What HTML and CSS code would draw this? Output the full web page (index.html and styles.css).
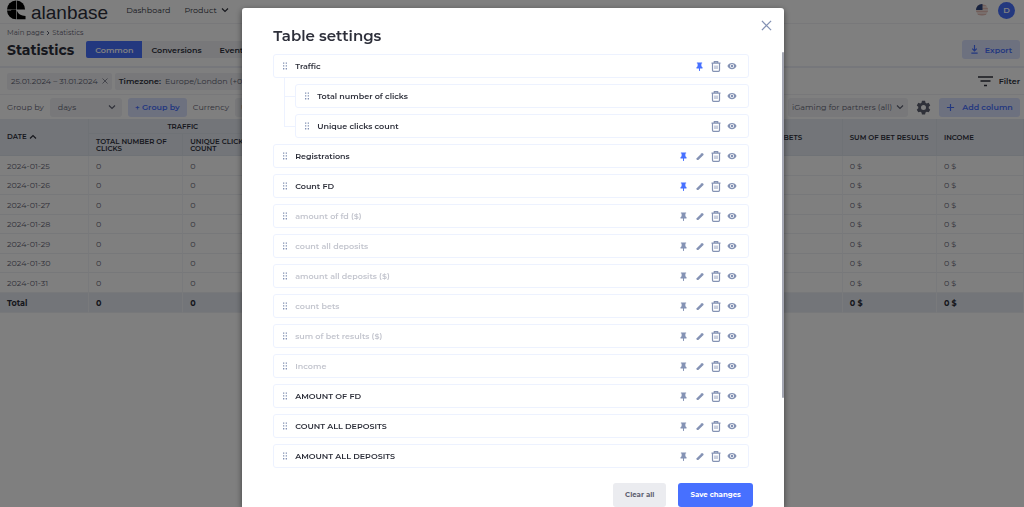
FILE: index.html
```html
<!DOCTYPE html>
<html lang="en">
<head>
  <meta charset="UTF-8">
  <meta name="viewport" content="width=device-width, initial-scale=1.0">
  <title>Statistics</title>
  <link rel="stylesheet" href="styles.css">
</head>
<body>
  <!-- Icons -->
  <svg class="sprite" aria-hidden="true">
    <symbol id="i-drag" viewBox="0 0 6 8">
      <path d="M1 .5h1.300v1.300H1zM3.700.5H5v1.300H3.700zM1 3.300h1.300v1.300H1zM3.700 3.300H5v1.300H3.700zM1 6.100h1.300v1.300H1zM3.700 6.100H5v1.300H3.700z" fill="currentColor"/>
    </symbol>
    <symbol id="i-pin" viewBox="0 0 24 24">
      <path d="M5 1h14v3h-2v7l3 3v3h-6.600v6L12 24l-1.400-1v-6H4v-3l3-3V4H5z" fill="currentColor"/>
    </symbol>
    <symbol id="i-edit" viewBox="0 0 24 24">
      <path d="M2 17.500V22.500h5L22.500 7.500a2 2 0 0 0 0-2.500l-3-3a2 2 0 0 0-2.500 0z" fill="currentColor"/>
    </symbol>
    <symbol id="i-trash" viewBox="0 0 10 11">
      <path d="M.5 2.200h9M3.300 2V.7h3.400V2M1.500 2.500v6.800a1 1 0 0 0 1 1h5a1 1 0 0 0 1-1V2.500" fill="none" stroke="currentColor" stroke-width="1.200"/>
      <path d="M4 4.500v3.500M6 4.500v3.500" stroke="currentColor" stroke-width=".9"/>
    </symbol>
    <symbol id="i-eye" viewBox="0 0 24 24">
      <path fill-rule="evenodd" d="M12 4.500C7 4.500 2.700 7.600 1 12c1.700 4.400 6 7.500 11 7.500s9.300-3.100 11-7.500c-1.700-4.400-6-7.500-11-7.500zM12 17a5 5 0 1 1 0-10 5 5 0 0 1 0 10zm0-8a3 3 0 1 0 0 6 3 3 0 0 0 0-6z" fill="currentColor"/>
    </symbol>
    <symbol id="i-down" viewBox="0 0 8 8">
      <path d="M1 2.500l3 3 3-3" fill="none" stroke="currentColor" stroke-width="1.200"/>
    </symbol>
    <symbol id="i-close" viewBox="0 0 12 12">
      <path d="M1 1l10 10M11 1L1 11" fill="none" stroke="currentColor" stroke-width="1.400"/>
    </symbol>
  </svg>

  <!-- Page -->
  <div class="page">
    <header class="topbar">
      <a class="logo" href="#">
        <svg viewBox="0 0 20 20" aria-hidden="true">
          <path d="M9.500 0v9.500H0A9.500 9.500 0 0 1 9.500 0z"/>
          <path d="M10.200 0A9.500 9.500 0 0 1 19 9.500h-8.800z"/>
          <path d="M0 10.500h4l1-.8h4.500v10A9.500 9.500 0 0 1 0 10.500z"/>
          <path d="M10.200 10.200c1.500 4 4.500 5.800 9.300 6v3.500h-9.300z"/>
        </svg>
        <span>alanbase</span>
      </a>
      <nav class="nav">
        <a href="#">Dashboard</a>
        <a href="#">Product <svg class="icon-sm"><use href="#i-down"/></svg></a>
      </nav>
      <svg class="flag" viewBox="0 0 12 12" aria-hidden="true">
        <clipPath id="round"><circle cx="6" cy="6" r="6"/></clipPath>
        <g clip-path="url(#round)">
          <path fill="#f0dcd8" d="M0 0h12v12H0z"/>
          <path stroke="#e4beb6" d="M0 1.500h12M0 4.500h12M0 7.500h12M0 10.500h12"/>
          <path fill="#2f4680" d="M0 0h6.500v6H0z"/>
        </g>
      </svg>
      <span class="avatar">D</span>
    </header>

    <div class="crumbs">
      <a href="#">Main page</a>
      <svg viewBox="0 0 4 6"><path d="M1 1l2 2-2 2" fill="none" stroke="currentColor"/></svg>
      <a href="#">Statistics</a>
    </div>

    <div class="heading">
      <h1>Statistics</h1>
      <div class="tabs">
        <button class="tab active">Common</button>
        <button class="tab">Conversions</button>
        <button class="tab">Events</button>
      </div>
      <button class="btn-light export">
        <svg class="icon" viewBox="0 0 10 10"><path d="M5 0v6M2.500 4L5 6.500 7.500 4M1.500 9h7" fill="none" stroke="currentColor" stroke-width="1.300"/></svg>
        Export
      </button>
    </div>

    <div class="filters">
      <span class="chip">25.01.2024 – 31.01.2024 <svg class="icon-xs"><use href="#i-close"/></svg></span>
      <span class="chip"><b>Timezone:</b> Europe/London (+00:00)</span>
      <button class="filter">
        <svg viewBox="0 0 15 11"><path d="M0 1h15M2.500 5h10M6 9.500h3" fill="none" stroke="currentColor" stroke-width="1.400"/></svg>
        Filter
      </button>
    </div>

    <div class="grouping">
      <label for="group">Group by</label>
      <span class="select-wrap days">
        <select id="group"><option>days</option></select>
        <svg class="icon-sm"><use href="#i-down"/></svg>
      </span>
      <button class="btn-light group-btn">+ Group by</button>
      <label for="currency">Currency</label>
      <span class="select-wrap currency">
        <select id="currency"><option>USD</option></select>
        <svg class="icon-sm"><use href="#i-down"/></svg>
      </span>
      <span class="select-wrap preset">
        <select aria-label="Preset"><option>iGaming for partners (all)</option></select>
        <svg class="icon-sm"><use href="#i-down"/></svg>
      </span>
      <button class="gear" aria-label="Table settings">
        <svg viewBox="0 0 24 24"><path fill-rule="evenodd" d="M9.500 1h5l.7 3.200 2 1.200 3.100-1 2.500 4.300-2.400 2.200v2.300l2.400 2.200-2.500 4.300-3.100-1-2 1.200-.7 3.100h-5l-.7-3.100-2-1.200-3.100 1-2.500-4.300 2.400-2.200v-2.300L1.200 8.700l2.500-4.300 3.100 1 2-1.200zM12 8a4 4 0 1 0 0 8 4 4 0 0 0 0-8z" fill="currentColor"/></svg>
      </button>
      <button class="btn-light add">
        <svg class="icon" viewBox="0 0 10 10"><path d="M5 1v8M1 5h8" stroke="currentColor" stroke-width="1.300"/></svg>
        Add column
      </button>
    </div>

    <table class="stats">
      <colgroup>
        <col class="col-date">
        <col class="col-value" span="9">
        <col>
      </colgroup>
      <thead>
        <tr>
          <th rowspan="2">DATE <svg class="icon-sm up"><use href="#i-down"/></svg></th>
          <th class="group" colspan="2">TRAFFIC</th>
          <th rowspan="2">REGISTRATIONS</th>
          <th rowspan="2">COUNT FD</th>
          <th rowspan="2">AMOUNT OF FD</th>
          <th rowspan="2">COUNT ALL DEPOSITS</th>
          <th rowspan="2">AMOUNT ALL DEPOSITS</th>
          <th rowspan="2">COUNT BETS</th>
          <th rowspan="2">SUM OF BET RESULTS</th>
          <th rowspan="2">INCOME</th>
        </tr>
        <tr>
          <th>TOTAL NUMBER OF CLICKS</th>
          <th>UNIQUE CLICKS COUNT</th>
        </tr>
      </thead>
      <tbody id="stats-body"></tbody>
    </table>
  </div>

  <!-- Table settings -->
  <div class="overlay">
    <div class="modal" role="dialog" aria-labelledby="modal-title">
      <div class="modal-head">
        <h2 id="modal-title">Table settings</h2>
        <button class="close" aria-label="Close"><svg><use href="#i-close"/></svg></button>
      </div>
      <div class="modal-body">
        <ul class="columns" id="columns"></ul>
        <span class="thumb"></span>
      </div>
      <div class="modal-foot">
        <button class="btn clear">Clear all</button>
        <button class="btn save">Save changes</button>
      </div>
    </div>
  </div>

  <script src="script.js"></script>
</body>
</html>
```

FILE: styles.css
```css
/* General Styles */
* {
  box-sizing: border-box;
}
body {
  margin: 0;
  font-family: Montserrat, Inter, "Liberation Sans", sans-serif;
  font-size: 8px;
  line-height: 10px;
  color: #2d2f3a;
  background: #fff;
  overflow: hidden;
}
h1, h2 {
  margin: 0;
  line-height: 20px;
}
h1 {
  font-size: 14px;
  font-weight: 700;
}
h2 {
  font-size: 15px;
  font-weight: 600;
}
a {
  color: inherit;
  text-decoration: none;
}
button, select {
  font: inherit;
  color: inherit;
  border: none;
  background: none;
  padding: 0;
  cursor: pointer;
}
.sprite {
  display: none;
}
.icon {
  width: 9px;
  height: 9px;
}
.icon-sm {
  width: 8px;
  height: 8px;
}
.icon-xs {
  width: 6px;
  height: 6px;
}

/* Top bar */
.topbar {
  display: flex;
  align-items: center;
  height: 24px;
  padding: 0 9px 3px 7px;
  border-bottom: 1px solid #f0f0f5;
}
.logo {
  display: flex;
  align-items: center;
  gap: 5px;
  font-family: "Liberation Sans", Arial, sans-serif;
  font-size: 19px;
  line-height: 20px;
}
.logo svg {
  width: 19px;
  height: 20px;
}
.logo span {
  padding-top: 5px;
}
.nav {
  display: flex;
  gap: 14px;
  margin-left: 18px;
  flex: 1;
}
.nav a {
  display: flex;
  align-items: center;
  gap: 4px;
}
.flag {
  width: 12px;
  height: 12px;
  margin-right: 10px;
}
.avatar {
  width: 17px;
  height: 17px;
  border-radius: 50%;
  background: #4770ff;
  color: #fff;
  font-weight: 600;
  line-height: 17px;
  text-align: center;
}

/* Page heading */
.crumbs {
  display: flex;
  align-items: center;
  gap: 2px;
  padding: 4px 7px 0;
  font-size: 7px;
  color: #5f6272;
}
.crumbs svg {
  width: 4px;
  height: 6px;
}
.heading {
  display: flex;
  align-items: center;
  height: 30px;
  padding: 0 4px 5px 7px;
  border-bottom: 2px solid #eceef6;
}
.tabs {
  display: flex;
  margin-left: 12px;
  background: #f0f1f5;
  border-radius: 2px;
}
.tab {
  height: 17px;
  padding: 0 9px;
  font-weight: 600;
}
.tab.active {
  background: #4770ff;
  color: #fff;
  border-radius: 2px 0 0 2px;
}
.btn-light {
  display: flex;
  align-items: center;
  justify-content: center;
  height: 19px;
  background: #dbe2ff;
  color: #4770ff;
  border-radius: 3px;
  font-weight: 600;
}
.export {
  gap: 6px;
  width: 58px;
  margin-left: auto;
}

/* Filters */
.filters, .grouping {
  display: flex;
  align-items: center;
  padding: 0 4px 0 7px;
}
.filters {
  gap: 3px;
  height: 27px;
  border-bottom: 1px solid #f0f0f5;
}
.chip {
  display: flex;
  align-items: center;
  gap: 4px;
  height: 17px;
  padding: 0 4px;
  background: #f0f1f5;
  border-radius: 2px;
  color: #5f6272;
}
.chip b {
  color: #2d2f3a;
  font-weight: 600;
}
.filter {
  display: flex;
  align-items: center;
  gap: 6px;
  margin-left: auto;
  font-weight: 600;
}
.filter svg {
  width: 15px;
  height: 11px;
}
.grouping {
  gap: 6px;
  height: 24px;
  color: #5f6272;
}
.select-wrap {
  display: flex;
  align-items: center;
  height: 19px;
  padding: 0 6px;
  background: #f0f1f5;
  border-radius: 3px;
}
.select-wrap select {
  appearance: none;
  flex: 1;
}
.days {
  width: 72px;
  padding-left: 8px;
}
.currency {
  width: 60px;
}
.preset {
  margin-left: auto;
  padding: 0 4px;
  gap: 3px;
}
.group-btn {
  width: 59px;
}
.add {
  gap: 7px;
  width: 81px;
}
.gear {
  padding: 0 2px;
}
.gear svg {
  display: block;
  width: 15px;
  height: 15px;
}

/* Statistics table */
.stats {
  width: 100%;
  table-layout: fixed;
  border-collapse: separate;
  border-spacing: 0;
  color: #5f6272;
}
.col-date {
  width: 8.7%;
}
.col-value {
  width: 9.2%;
}
.stats th, .stats td {
  padding: 0 7px;
  text-align: left;
  border-bottom: 1px solid #eef0f5;
  border-right: 1px solid #f3f4f8;
}
.stats th {
  height: 22px;
  background: #e7ebf3;
  color: #2d2f3a;
  border-color: #dfe4ed;
  font-size: 7px;
  line-height: 7px;
  font-weight: 600;
}
.stats .group {
  height: 15px;
  text-align: center;
}
.stats tbody tr {
  height: 20px;
}
.stats tbody tr:nth-child(even):not(.total) {
  height: 19px;
}
.stats .total td {
  background: #e7ebf3;
  color: #2d2f3a;
  font-weight: 700;
}
.up {
  transform: rotate(180deg);
  vertical-align: middle;
}

/* Modal */
.overlay {
  position: fixed;
  inset: 0;
  display: flex;
  justify-content: center;
  padding: 8px 0 0 2px;
  background: rgba(0, 0, 0, 0.5);
}
.modal {
  display: flex;
  flex-direction: column;
  width: 53%;
  min-width: 400px;
  background: #fff;
  border-radius: 3px 3px 0 0;
  box-shadow: 0 2px 6px rgba(0, 0, 0, 0.5);
}
.modal-head {
  display: flex;
  justify-content: space-between;
  padding: 12px 12px 0 31px;
}
.modal-head h2 {
  padding-top: 6px;
}
.close {
  align-self: flex-start;
  color: #8492b4;
}
.close svg {
  display: block;
  width: 11px;
  height: 11px;
}
.modal-body {
  position: relative;
  padding: 8px 35px 0 31px;
}
.thumb {
  position: absolute;
  top: 6px;
  right: 0;
  width: 2px;
  height: 82%;
  background: #a4a7b3;
  border-radius: 1px;
}
.columns, .columns ul {
  display: flex;
  flex-direction: column;
  gap: 6px;
  margin: 0;
  padding: 0;
  list-style: none;
}
.columns ul {
  margin-top: 6px;
  padding-left: 22px;
}
.columns ul li {
  position: relative;
}
/* tree lines */
.columns ul li::before {
  content: "";
  position: absolute;
  left: -11px;
  top: -18px;
  width: 11px;
  height: 30px;
  border-left: 1px solid #edf2ff;
  border-bottom: 1px solid #edf2ff;
}
.columns ul li:first-child::before {
  top: -6px;
  height: 18px;
}
.row {
  display: flex;
  align-items: center;
  gap: 6px;
  height: 24px;
  padding: 0 11px 0 8px;
  border: 1px solid #edf2ff;
  border-radius: 3px;
  font-weight: 600;
}
.row.off .name {
  color: #c3c5ce;
}
.row .name {
  flex: 1;
}
.drag {
  width: 6px;
  height: 8px;
  margin-right: 1px;
  color: #8492b4;
}
.tool {
  display: flex;
  justify-content: center;
  width: 10px;
  color: #8492b4;
}
.tool svg {
  width: 9px;
  height: 9px;
}
.tool.edit svg {
  width: 8px;
}
.tool.trash svg {
  width: 10px;
  height: 11px;
}
.tool.eye svg {
  width: 10px;
  height: 10px;
}
.tool.pinned {
  color: #4770ff;
}
.modal-foot {
  display: flex;
  justify-content: flex-end;
  gap: 12px;
  padding: 15px 31px 0;
}
.btn {
  height: 24px;
  padding: 0 12px;
  border-radius: 3px;
  font-size: 7px;
  font-weight: 700;
}
.clear {
  background: #ebecf0;
  color: #5f6272;
}
.save {
  background: #4770ff;
  color: #fff;
}
```

FILE: script.js
```js
const dates = [
  "2024-01-25", "2024-01-26", "2024-01-27", "2024-01-28",
  "2024-01-29", "2024-01-30", "2024-01-31"
];
const values = ["0", "0", "0", "0", "0 $", "0", "0 $", "0", "0 $", "0 $"];

const columns = [
  { name: "Traffic", tools: ["pinned", "trash", "eye"], children: [
    { name: "Total number of clicks", tools: ["trash", "eye"] },
    { name: "Unique clicks count", tools: ["trash", "eye"] }
  ] },
  { name: "Registrations", tools: ["pinned", "edit", "trash", "eye"] },
  { name: "Count FD", tools: ["pinned", "edit", "trash", "eye"] },
  { name: "amount of fd ($)", off: true },
  { name: "count all deposits", off: true },
  { name: "amount all deposits ($)", off: true },
  { name: "count bets", off: true },
  { name: "sum of bet results ($)", off: true },
  { name: "Income", off: true },
  { name: "AMOUNT OF FD" },
  { name: "COUNT ALL DEPOSITS" },
  { name: "AMOUNT ALL DEPOSITS" }
];
const defaultTools = ["pin", "edit", "trash", "eye"];
const labels = { pin: "Pin", pinned: "Unpin", edit: "Edit", trash: "Delete", eye: "Show or hide" };

function renderStats() {
  const rows = dates.map(date => `<tr><td>${date}</td>${values.map(v => `<td>${v}</td>`).join("")}</tr>`);
  rows.push(`<tr class="total"><td>Total</td>${values.map(v => `<td>${v}</td>`).join("")}</tr>`);
  document.getElementById("stats-body").innerHTML = rows.join("");
}

function renderColumn(column) {
  const tools = (column.tools || defaultTools).map(tool => {
    const icon = tool === "pinned" ? "pin" : tool;
    return `<button class="tool ${tool}" aria-label="${labels[tool]}"><svg><use href="#i-${icon}"/></svg></button>`;
  }).join("");
  const children = column.children ? `<ul>${column.children.map(renderColumn).join("")}</ul>` : "";
  return `<li>
    <div class="row${column.off ? " off" : ""}">
      <svg class="drag"><use href="#i-drag"/></svg>
      <span class="name">${column.name}</span>
      ${tools}
    </div>
    ${children}
  </li>`;
}

renderStats();
document.getElementById("columns").innerHTML = columns.map(renderColumn).join("");
```
